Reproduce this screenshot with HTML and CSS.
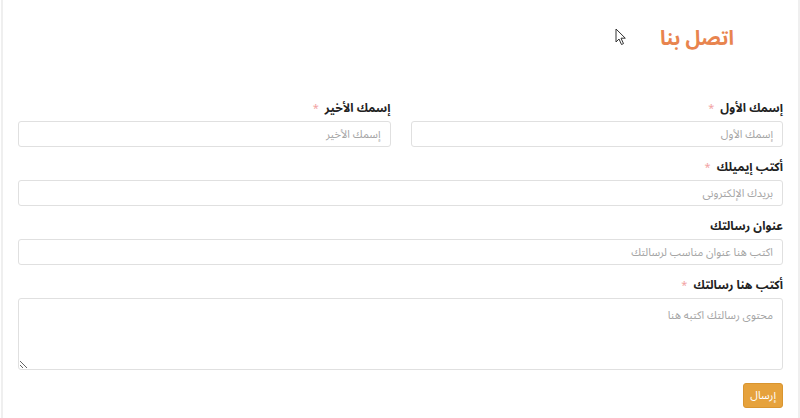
FILE: index.html
```html
<!DOCTYPE html>
<html lang="ar" dir="rtl">
<head>
<meta charset="utf-8">
<title>اتصل بنا</title>
<link rel="stylesheet" href="styles.css">
</head>
<body>
<div class="page">
  <header class="head">
    <h1 class="title">اتصل بنا</h1>
  </header>
  <form class="form">
    <div class="row">
      <div class="field">
        <label class="label">إسمك الأول <span class="req">*</span></label>
        <input class="input" type="text" placeholder="إسمك الأول">
      </div>
      <div class="field">
        <label class="label">إسمك الأخير <span class="req">*</span></label>
        <input class="input" type="text" placeholder="إسمك الأخير">
      </div>
    </div>
    <div class="field">
      <label class="label">أكتب إيميلك <span class="req">*</span></label>
      <input class="input" type="email" placeholder="بريدك الإلكترونى">
    </div>
    <div class="field">
      <label class="label">عنوان رسالتك</label>
      <input class="input" type="text" placeholder="اكتب هنا عنوان مناسب لرسالتك">
    </div>
    <div class="field">
      <label class="label">أكتب هنا رسالتك <span class="req">*</span></label>
      <textarea class="input area" placeholder="محتوى رسالتك اكتبه هنا"></textarea>
    </div>
    <div class="actions">
      <button class="btn" type="button">إرسال</button>
    </div>
  </form>
  <svg class="cursor" width="12" height="18" viewBox="0 0 12 18"><path d="M1 1 L1 14 L4 11 L6.5 16.5 L8.5 15.6 L6 10.2 L10.3 10.2 Z" fill="#fff" stroke="#333" stroke-width="1"/></svg>
</div>
</body>
</html>
```
FILE: styles.css
```css
* { box-sizing: border-box; }
html, body { margin: 0; padding: 0; background: #fff; }
body {
  font-family: "Noto Sans Arabic", "DejaVu Sans", "Noto Sans", sans-serif;
  color: #222;
}
.page {
  position: relative;
  width: 799px;
  height: 418px;
  border-left: 2px solid #efefef;
  border-right: 2px solid #efefef;
}
.head {
  height: 99px;
  padding: 24px 64px 0 0;
}
.title {
  margin: 0;
  font-size: 20px;
  line-height: 30px;
  font-weight: bold;
  color: #e8844e;
}
.form {
  padding: 0 15px;
  display: flex;
  flex-direction: column;
}
.row {
  display: flex;
  gap: 20px;
}
.row .field { flex: 1; }
.field {
  display: flex;
  flex-direction: column;
  margin-bottom: 11px;
}
.label {
  font-size: 12px;
  font-weight: bold;
  line-height: 20px;
  margin-bottom: 2px;
  color: #222;
}
.req {
  color: #f2a3a3;
  font-weight: normal;
  font-size: 11px;
  margin-right: 3px;
}
.input {
  height: 26px;
  border: 1px solid #e0e0e0;
  border-radius: 3px;
  padding: 0 9px;
  font-family: inherit;
  font-size: 11px;
  color: #333;
  background: #fff;
  outline: none;
}
.input::placeholder { color: #a5a5a5; }
.area {
  height: 72px;
  padding-top: 5px;
  resize: vertical;
}
.actions {
  display: flex;
  margin-top: 2px;
}
.btn {
  background: #e6a23c;
  color: #fff;
  border: 1px solid #d99530;
  border-radius: 3px;
  height: 25px;
  padding: 0 6px;
  font-family: inherit;
  font-size: 11px;
}
.cursor {
  position: absolute;
  left: 612px;
  top: 28px;
}
```
